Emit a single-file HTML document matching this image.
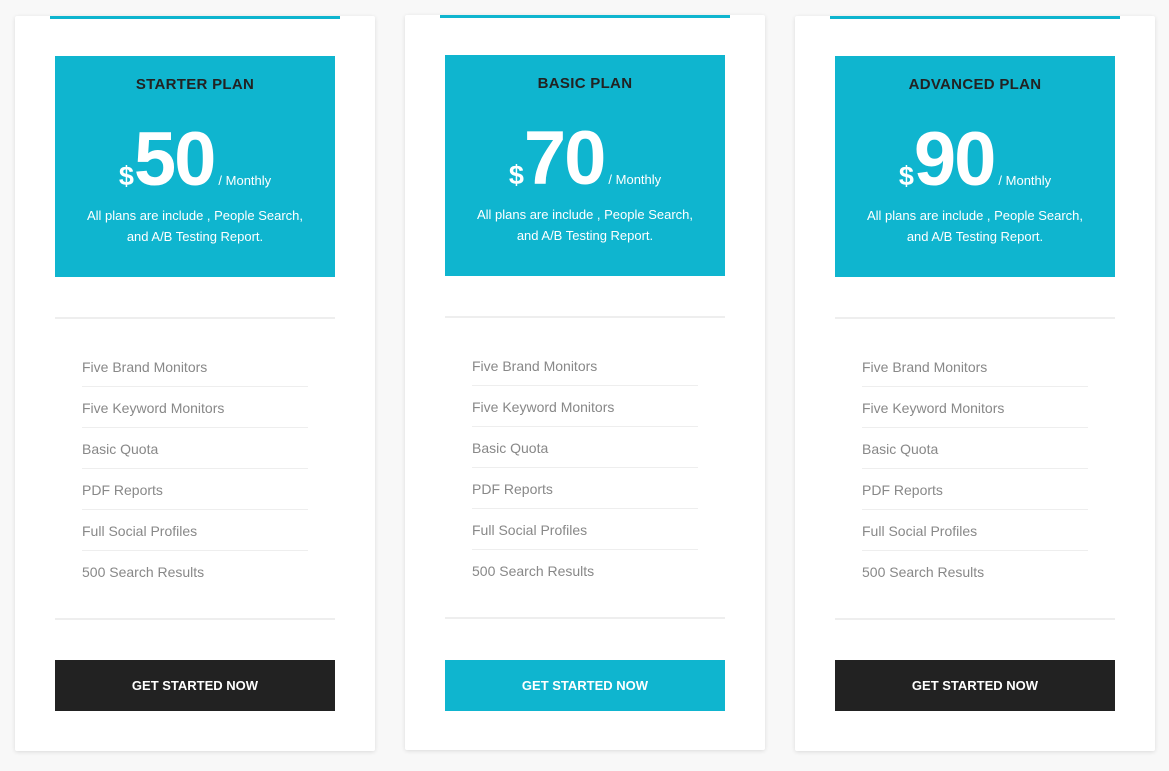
<!DOCTYPE html><html><head><style>
body{margin:0;background:#f8f8f8;width:1169px;height:771px;position:relative;overflow:hidden;font-family:"Liberation Sans",sans-serif}
.card{position:absolute;width:360px;height:735px;background:#fff;box-shadow:0 1px 4px rgba(0,0,0,.12);border-radius:2px}
.bar{position:absolute;left:35px;top:0;width:290px;height:3px;background:#0fb5cf}
.box{position:absolute;left:40px;top:40px;width:280px;height:221px;background:#0fb5cf;text-align:center}
.t{position:absolute;top:20px;width:100%;font-weight:bold;font-size:15px;color:#222;letter-spacing:.3px}
.p{position:absolute;top:64px;width:100%;color:#fff;font-weight:bold}
.p .d{font-size:27px;vertical-align:0}
.p .n{font-size:76px;letter-spacing:-2px;line-height:80px}
.p .m{font-size:13px;font-weight:normal;margin-left:4px}
.ds{position:absolute;top:149px;width:100%;color:#fff;font-size:13px;line-height:21px}
.hr{position:absolute;left:40px;width:280px;height:2px;background:#eee}
ul{position:absolute;left:67px;top:330px;width:226px;margin:0;padding:0;list-style:none}
li{height:40px;line-height:42px;border-bottom:1px solid #eee;color:#888;font-size:14px}
li:last-child{border:none}
.btn{position:absolute;left:40px;top:644px;width:280px;height:51px;line-height:51px;text-align:center;color:#fff;font-weight:bold;font-size:13px;background:#222}
</style></head><body>
<div class="card" style="left:15px;top:16px"><div class="bar"></div><div class="box"><div class="t">STARTER PLAN</div><div class="p"><span class="d">$</span><span class="n">50</span><span class="m">/ Monthly</span></div><div class="ds">All plans are include , People Search,<br>and A/B Testing Report.</div></div><div class="hr" style="top:301px"></div><ul><li>Five Brand Monitors</li><li>Five Keyword Monitors</li><li>Basic Quota</li><li>PDF Reports</li><li>Full Social Profiles</li><li>500 Search Results</li></ul><div class="hr" style="top:602px"></div><div class="btn">GET STARTED NOW</div></div>
<div class="card" style="left:405px;top:15px"><div class="bar"></div><div class="box"><div class="t">BASIC PLAN</div><div class="p"><span class="d">$</span><span class="n">70</span><span class="m">/ Monthly</span></div><div class="ds">All plans are include , People Search,<br>and A/B Testing Report.</div></div><div class="hr" style="top:301px"></div><ul><li>Five Brand Monitors</li><li>Five Keyword Monitors</li><li>Basic Quota</li><li>PDF Reports</li><li>Full Social Profiles</li><li>500 Search Results</li></ul><div class="hr" style="top:602px"></div><div class="btn" style="background:#0fb5cf;top:645px">GET STARTED NOW</div></div>
<div class="card" style="left:795px;top:16px"><div class="bar"></div><div class="box"><div class="t">ADVANCED PLAN</div><div class="p"><span class="d">$</span><span class="n">90</span><span class="m">/ Monthly</span></div><div class="ds">All plans are include , People Search,<br>and A/B Testing Report.</div></div><div class="hr" style="top:301px"></div><ul><li>Five Brand Monitors</li><li>Five Keyword Monitors</li><li>Basic Quota</li><li>PDF Reports</li><li>Full Social Profiles</li><li>500 Search Results</li></ul><div class="hr" style="top:602px"></div><div class="btn">GET STARTED NOW</div></div>
</body></html>
